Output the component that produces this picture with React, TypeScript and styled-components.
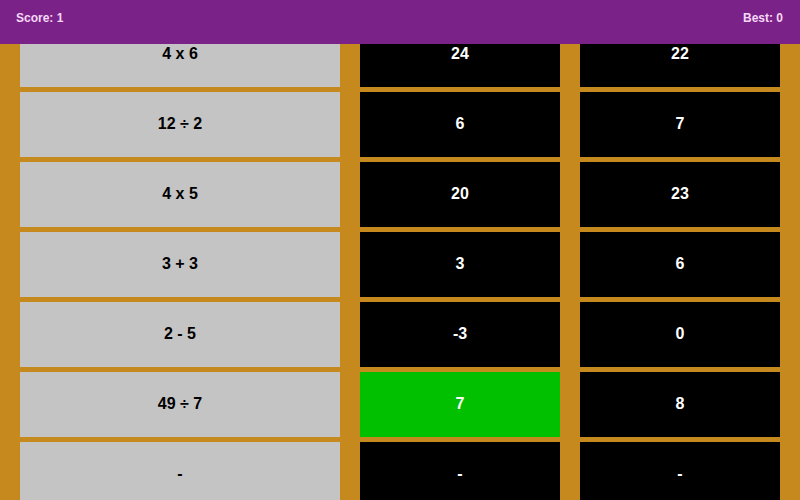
import React from "react";
import styled, { createGlobalStyle } from "styled-components";

const GlobalStyle = createGlobalStyle`
  html, body {
    margin: 0;
    padding: 0;
    background: #c5891e;
    font-family: "Liberation Sans", Arial, sans-serif;
    overflow: hidden;
  }
`;

const Header = styled.header`
  position: fixed;
  top: 0;
  left: 0;
  right: 0;
  height: 44px;
  background: #7b2289;
  color: #f5d8f5;
  display: flex;
  justify-content: space-between;
  align-items: flex-start;
  padding: 11px 17px 0 16px;
  box-sizing: border-box;
  font-size: 12px;
  font-weight: bold;
  z-index: 2;
`;

const Board = styled.main`
  display: grid;
  grid-template-columns: 320px 200px 200px;
  grid-auto-rows: 65px;
  column-gap: 20px;
  row-gap: 5px;
  padding: 22px 20px 0;
  height: 500px;
  box-sizing: border-box;
`;

type Tone = "question" | "answer" | "correct";

const Cell = styled.div<{ $tone: Tone }>`
  display: flex;
  align-items: center;
  justify-content: center;
  padding-bottom: 1px;
  box-sizing: border-box;
  font-size: 16px;
  font-weight: bold;
  background: ${(p) =>
    p.$tone === "question" ? "#c4c4c4" : p.$tone === "correct" ? "#00c000" : "#000"};
  color: ${(p) => (p.$tone === "question" ? "#000" : "#fff")};
`;

const rows = [
  { q: "4 x 6", a: "24", b: "22" },
  { q: "12 ÷ 2", a: "6", b: "7" },
  { q: "4 x 5", a: "20", b: "23" },
  { q: "3 + 3", a: "3", b: "6" },
  { q: "2 - 5", a: "-3", b: "0" },
  { q: "49 ÷ 7", a: "7", b: "8", correct: true },
  { q: "-", a: "-", b: "-" },
];

export default function App() {
  return (
    <>
      <GlobalStyle />
      <Header>
        <span>Score: 1</span>
        <span>Best: 0</span>
      </Header>
      <Board>
        {rows.map((r, i) => (
          <React.Fragment key={i}>
            <Cell $tone="question">{r.q}</Cell>
            <Cell $tone={r.correct ? "correct" : "answer"}>{r.a}</Cell>
            <Cell $tone="answer">{r.b}</Cell>
          </React.Fragment>
        ))}
      </Board>
    </>
  );
}
